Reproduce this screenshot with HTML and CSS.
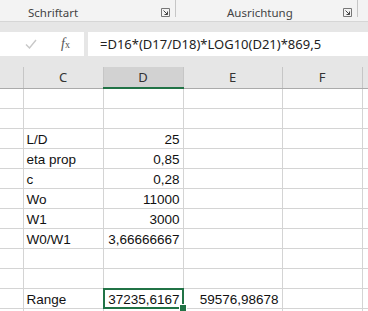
FILE: index.html
```html
<!DOCTYPE html>
<html lang="de">
<head>
    <meta charset="UTF-8">
    <title>Range</title>
    <link rel="stylesheet" href="styles.css">
</head>
<body>
<div class="ribbon">
    <div class="group group-font">
        <span class="group-label">Schriftart</span>
        <span class="launcher"><svg width="9" height="9" viewBox="0 0 9 9"><path d="M0.5 8.5V0.5h8v8z" fill="none" stroke="#777"/><path d="M2.5 2.5l4 4M6.5 3.5v3h-3" fill="none" stroke="#444"/></svg></span>
    </div>
    <div class="group group-align">
        <span class="group-label">Ausrichtung</span>
        <span class="launcher"><svg width="9" height="9" viewBox="0 0 9 9"><path d="M0.5 8.5V0.5h8v8z" fill="none" stroke="#777"/><path d="M2.5 2.5l4 4M6.5 3.5v3h-3" fill="none" stroke="#444"/></svg></span>
    </div>
</div>

<div class="formula-bar">
    <div class="fx-box">
        <span class="check"><svg width="12" height="10" viewBox="0 0 12 10"><path d="M1 5.5l3.5 3.5L11 1" fill="none" stroke="#c8c8c8" stroke-width="1.4"/></svg></span>
        <span class="fx"><i>f</i><small>x</small></span>
    </div>
    <div class="formula">=D16*(D17/D18)*LOG10(D21)*869,5</div>
</div>

<div class="sheet">
    <table>
        <colgroup>
            <col class="c-rh">
            <col class="c-std">
            <col class="c-std">
            <col class="c-wide">
            <col class="c-std">
            <col class="c-rest">
        </colgroup>
        <thead>
        <tr>
            <th class="rh"></th>
            <th>C</th>
            <th class="sel">D</th>
            <th>E</th>
            <th>F</th>
            <th></th>
        </tr>
        </thead>
        <tbody>
        <tr><td class="rh"></td><td></td><td></td><td></td><td></td><td></td></tr>
        <tr><td class="rh"></td><td></td><td></td><td></td><td></td><td></td></tr>
        <tr><td class="rh"></td><td>L/D</td><td class="num">25</td><td></td><td></td><td></td></tr>
        <tr><td class="rh"></td><td>eta prop</td><td class="num">0,85</td><td></td><td></td><td></td></tr>
        <tr><td class="rh"></td><td>c</td><td class="num">0,28</td><td></td><td></td><td></td></tr>
        <tr><td class="rh"></td><td>Wo</td><td class="num">11000</td><td></td><td></td><td></td></tr>
        <tr><td class="rh"></td><td>W1</td><td class="num">3000</td><td></td><td></td><td></td></tr>
        <tr><td class="rh"></td><td>W0/W1</td><td class="num">3,66666667</td><td></td><td></td><td></td></tr>
        <tr><td class="rh"></td><td></td><td></td><td></td><td></td><td></td></tr>
        <tr><td class="rh"></td><td></td><td></td><td></td><td></td><td></td></tr>
        <tr><td class="rh"></td><td>Range</td><td class="num active">37235,6167<span class="handle"></span></td><td class="num">59576,98678</td><td></td><td></td></tr>
        <tr><td class="rh"></td><td></td><td></td><td></td><td></td><td></td></tr>
        </tbody>
    </table>
</div>
</body>
</html>
```

FILE: styles.css
```css
body {
    margin: 0;
    width: 368px;
    height: 311px;
    overflow: hidden;
    background-color: #e6e6e6;
    font-family: 'Noto Sans', sans-serif;
}

/* Ribbon */
.ribbon {
    display: flex;
    height: 22px;
    background-color: #f3f3f3;
    border-bottom: 1px solid #d6d6d6;
    box-sizing: border-box;
}

.group {
    position: relative;
    display: flex;
    align-items: flex-end;
    height: 21px;
    font-size: 11.5px;
    color: #444;
}

.group::after {
    content: '';
    position: absolute;
    right: 0;
    top: 0;
    height: 17px;
    border-right: 1px solid #c6c6c6;
}

.group-font {
    width: 176px;
}

.group-align {
    width: 182px;
}

.group-label {
    line-height: 16px;
}

.group-font .group-label {
    margin-left: 28px;
}

.group-align .group-label {
    margin-left: 51px;
}

.launcher {
    margin-left: auto;
    margin-right: 6px;
    margin-bottom: 4px;
    display: flex;
}

/* Formula bar */
.formula-bar {
    display: flex;
    gap: 4px;
    height: 24px;
    margin-top: 10px;
    margin-bottom: 11px;
}

.fx-box {
    width: 84px;
    background-color: #fff;
    display: flex;
    align-items: center;
}

.check {
    margin-left: 25px;
    display: flex;
}

.fx {
    margin-left: 24px;
    font-family: 'Liberation Serif', serif;
    font-size: 14px;
    color: #555;
}

.fx small {
    font-size: 10px;
}

.formula {
    flex: 1;
    background-color: #fff;
    font-size: 13px;
    color: #222;
    line-height: 24px;
    padding-left: 12px;
}

/* Sheet */
.sheet {
    background-color: #fff;
}

table {
    border-collapse: collapse;
    table-layout: fixed;
    width: 372px;
    font-family: 'Liberation Sans', sans-serif;
    font-size: 13.5px;
}

.c-rh { width: 23px; }
.c-std { width: 80px; }
.c-wide { width: 99px; }
.c-rest { width: 10px; }

th, td {
    border: 1px solid #d4d4d4;
    height: 19px;
    padding: 0 3px;
    white-space: nowrap;
}

th {
    height: 20px;
    background-color: #e6e6e6;
    border-color: #c6c6c6;
    border-top: none;
    border-bottom: 1px solid #ababab;
    font-weight: normal;
    color: #333;
    font-family: 'Noto Sans', sans-serif;
    font-size: 13px;
}

th.sel {
    background-color: #d2d2d2;
    border-bottom: 2px solid #217346;
}

.rh {
    border-left: none;
}

td.rh {
    background-color: #fff;
}

td {
    color: #111;
    vertical-align: bottom;
    line-height: 17px;
}

.num {
    text-align: right;
}

.active {
    position: relative;
}

.active::after {
    content: '';
    position: absolute;
    left: -1px;
    top: -1px;
    right: -1px;
    bottom: -1px;
    border: 2px solid #217346;
}

.handle {
    position: absolute;
    right: -4px;
    bottom: -4px;
    width: 6px;
    height: 6px;
    background-color: #217346;
    border: 1px solid #fff;
    z-index: 1;
}
```
